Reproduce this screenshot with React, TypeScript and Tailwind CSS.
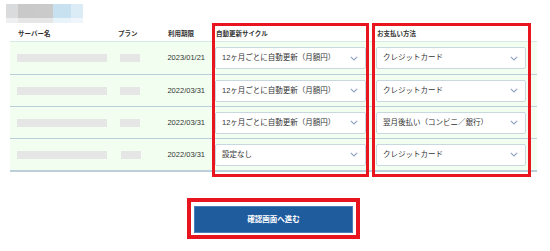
import React from 'react';

type Row = {
  date: string;
  cycle: string;
  payment: string;
  planShift?: boolean;
};

const rows: Row[] = [
  { date: '2023/01/21', cycle: '12ヶ月ごとに自動更新（月額円）', payment: 'クレジットカード' },
  { date: '2022/03/31', cycle: '12ヶ月ごとに自動更新（月額円）', payment: 'クレジットカード' },
  { date: '2022/03/31', cycle: '12ヶ月ごとに自動更新（月額円）', payment: '翌月後払い（コンビニ／銀行）' },
  { date: '2022/03/31', cycle: '設定なし', payment: 'クレジットカード', planShift: true },
];

const Chevron: React.FC = () => (
  <svg width="8" height="5" viewBox="0 0 8 5" className="shrink-0">
    <path d="M0.8 0.8 L4 4 L7.2 0.8" fill="none" stroke="#8fa3bd" strokeWidth="1.1" />
  </svg>
);

const SelectBox: React.FC<{ value: string; width: string }> = ({ value, width }) => (
  <div
    className={`${width} h-[22px] flex items-center justify-between pl-[6px] pr-[7px] bg-white border border-[#c9d8de] rounded-[2px] text-[7.5px] text-[#333]`}
  >
    <span className="whitespace-nowrap">{value}</span>
    <Chevron />
  </div>
);

const App: React.FC = () => {
  return (
    <div
      className="relative w-[550px] h-[251px] bg-white overflow-hidden"
      style={{ fontFamily: '"Liberation Sans", "Noto Sans CJK JP", sans-serif' }}
    >
      {/* blurred title */}
      <div className="ml-[6px] pt-[4px] flex h-[23px]">
        <div className="flex flex-col">
          <div className="flex h-[14px]">
            <div className="w-[12px] bg-[#d9dbdd]" />
            <div className="w-[18px] bg-[#c9c9c9]" />
            <div className="w-[17px] bg-[#cacaca]" />
            <div className="w-[18px] bg-[#c7e1f1]" />
            <div className="w-[12px] bg-[#dcecf7]" />
          </div>
          <div className="flex h-[5px]">
            <div className="w-[12px] bg-[#eeeff0]" />
            <div className="w-[35px] bg-[#e6e6e6]" />
            <div className="w-[18px] bg-[#e8f3fa]" />
            <div className="w-[12px] bg-[#eef5fb]" />
          </div>
        </div>
      </div>

      {/* table */}
      <div className="ml-[10px] mt-[4px] w-[527px]">
        <div className="flex h-[14px] items-center text-[6.5px] font-bold text-[#333]">
          <div className="w-[100px] pl-[8px]">サーバー名</div>
          <div className="w-[50px] pl-[8px]">プラン</div>
          <div className="w-[52px] pl-[8px]">利用期限</div>
          <div className="w-[160px] pl-[4px]">自動更新サイクル</div>
          <div className="w-[159px] pl-[5px]">お支払い方法</div>
        </div>
        <div className="border-t border-[#d6e9e2]">
          {rows.map((r, i) => (
            <div
              key={i}
              className={`flex h-[32px] items-center bg-[#f2fff0] ${i === 0 ? '' : 'border-t border-[#bcd0dc]'}`}
            >
              <div className="w-[100px] pl-[7px]">
                <div className="w-[90px] h-[8px] bg-[#e6e6e6]" />
              </div>
              <div className={`w-[50px] ${r.planShift ? 'pl-[11px]' : 'pl-[10px]'}`}>
                <div className="w-[20px] h-[8px] bg-[#e6e6e6]" />
              </div>
              <div className="w-[52px] pr-[7px] text-right text-[7.5px] text-[#333]">{r.date}</div>
              <div className="w-[160px] pl-[3px]">
                <SelectBox value={r.cycle} width="w-[151px]" />
              </div>
              <div className="w-[159px] pl-[4px]">
                <SelectBox value={r.payment} width="w-[150px]" />
              </div>
            </div>
          ))}
        </div>
        <div className="border-t-2 border-[#bcd0dc]" />
      </div>

      {/* submit */}
      <div className="mt-[33px] ml-[194px]">
        <button className="w-[159px] h-[27px] bg-[#1f5c9e] border border-[#4a7fb8] text-white text-[7.5px] font-bold">
          確認画面へ進む
        </button>
      </div>

      {/* highlight boxes */}
      <div className="absolute left-[212px] top-[23px] w-[157px] h-[154px] border-[3px] border-[#e8141e] pointer-events-none" />
      <div className="absolute left-[372px] top-[23px] w-[159px] h-[154px] border-[3px] border-[#e8141e] pointer-events-none" />
      <div className="absolute left-[187px] top-[198px] w-[173px] h-[41px] border-[4px] border-[#e8141e] pointer-events-none" />
    </div>
  );
};

export default App;
